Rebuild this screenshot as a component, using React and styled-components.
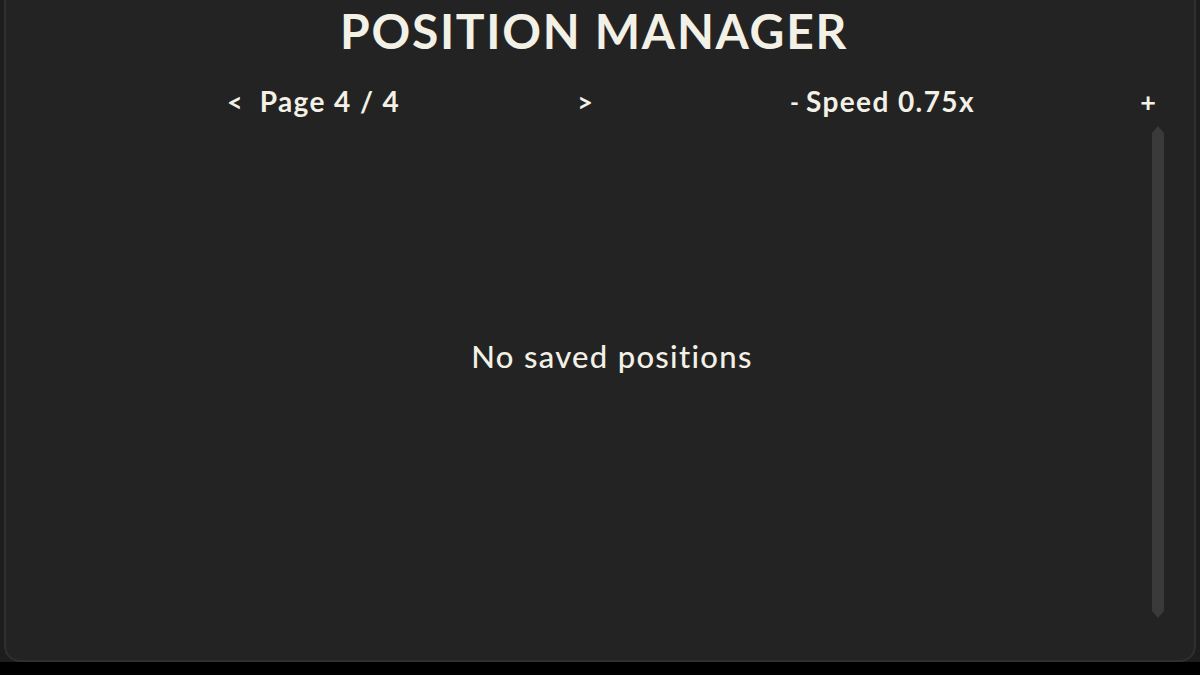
import React from "react";
import styled, { createGlobalStyle } from "styled-components";

const GlobalStyle = createGlobalStyle`
  html, body {
    margin: 0;
    padding: 0;
    background: #000;
  }
  body {
    font-family: Lato, "Open Sans", sans-serif;
    color: #f3f1e6;
  }
`

const Frame = styled.div`
  height: 662px;
  box-sizing: border-box;
  padding: 0 4px 0 4px;
  background: #1d1d1d;
`

const Panel = styled.div`
  height: 100%;
  box-sizing: border-box;
  display: flex;
  flex-direction: column;
  background: #232323;
  border: 2px solid #2f2f2f;
  border-top: none;
  border-radius: 0 0 16px 16px;
`

const Title = styled.h1`
  margin: 0;
  padding: 7px 12px 0 0;
  text-align: center;
  font-size: 48px;
  line-height: 48px;
  font-weight: 700;
  letter-spacing: 1.7px;
`

const Controls = styled.div`
  display: grid;
  grid-template-columns: 366px 366px;
  column-gap: 197px;
  padding-left: 221px;
  margin-top: 29px;
  height: 30px;
  align-items: center;
`

const Group = styled.div`
  display: flex;
  align-items: center;
  font-size: 28px;
  font-weight: 700;
  letter-spacing: 1.4px;
`

const Arrow = styled.span`
  font-size: ${(p) => (p.small ? "24px" : "27px")};
  font-weight: 700;
  letter-spacing: 0;
  margin-left: ${(p) => (p.end ? "auto" : "0")};
  margin-right: ${(p) => p.gap || "0"};
`

const Body = styled.div`
  flex: 1;
  display: flex;
  padding: 12px 30px 42px 0;
`

const Message = styled.div`
  flex: 1;
  display: flex;
  align-items: center;
  justify-content: center;
  padding-left: 66px;
  padding-bottom: 33px;
  font-size: 31px;
  font-weight: 500;
  letter-spacing: 1.3px;
`

const Scrollbar = styled.div`
  width: 12px;
  background: #3a3a3a;
  border-radius: 6px;
  clip-path: polygon(50% 0, 100% 7px, 100% calc(100% - 7px), 50% 100%, 0 calc(100% - 7px), 0 7px);
`

const App = () => {
  return (
    <>
      <GlobalStyle />
      <Frame>
        <Panel>
          <Title>POSITION MANAGER</Title>
          <Controls>
            <Group>
              <Arrow gap="17px">&lt;</Arrow>
              <span>Page 4 / 4</span>
              <Arrow end>&gt;</Arrow>
            </Group>
            <Group>
              <Arrow small gap="7px">-</Arrow>
              <span>Speed 0.75x</span>
              <Arrow end>+</Arrow>
            </Group>
          </Controls>
          <Body>
            <Message>No saved positions</Message>
            <Scrollbar />
          </Body>
        </Panel>
      </Frame>
    </>
  )
}

export default App
